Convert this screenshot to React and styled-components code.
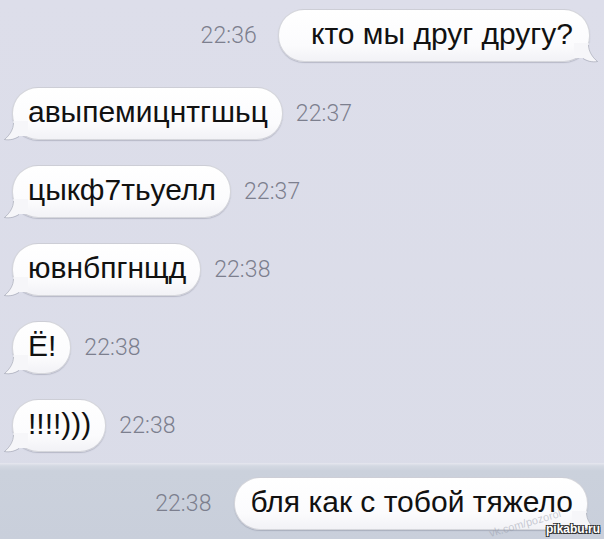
import React from "react";
import styled, { createGlobalStyle } from "styled-components";

const Global = createGlobalStyle`
  html, body { margin: 0; padding: 0; }
  body { background: #dcdde8; font-family: "Liberation Sans", Arial, sans-serif; }
`;

const Screen = styled.div`
  width: 604px;
  height: 539px;
  overflow: hidden;
  display: flex;
  flex-direction: column;
  background: linear-gradient(180deg, #dddeea 0%, #dadce8 100%);
  position: relative;
`;

const Thread = styled.div`
  height: 463px;
  box-sizing: border-box;
  padding: 9px 14px 0 12px;
  display: flex;
  flex-direction: column;
  gap: 25px;
`;

const Row = styled.div`
  display: flex;
  align-items: center;
  justify-content: ${(p) => (p.$out ? "flex-end" : "flex-start")};
  gap: ${(p) => (p.$out ? "21px" : "13px")};
`;

const Bubble = styled.div`
  position: relative;
  height: 53px;
  box-sizing: border-box;
  display: flex;
  align-items: center;
  padding: 0 ${(p) => p.$pr || 14}px 3px ${(p) => p.$pl || 15}px;
  border-radius: 26px;
  background: linear-gradient(180deg, #ffffff 0%, #fbfbfd 70%, #f2f2f6 100%);
  border: 1px solid rgba(120, 124, 140, 0.3);
  box-shadow: 0 1px 1px rgba(90, 95, 115, 0.28);
  font-size: 30px;
  color: #111;
  white-space: nowrap;
`;

const Time = styled.span`
  font-family: Roboto, "Liberation Sans", sans-serif;
  font-weight: 300;
  font-size: 23px;
  color: #7c7f8e;
  letter-spacing: 0.1px;
`;

const TailSvg = styled.svg`
  position: absolute;
  bottom: -2px;
  ${(p) => (p.$out ? "right: -9px; transform: scaleX(-1);" : "left: -9px;")}
  width: 24px;
  height: 20px;
  overflow: visible;
`;

const Tail = ({ out }) => (
  <TailSvg $out={out} viewBox="0 0 24 20">
    <path
      d="M9.5 0 C9.5 8, 6 14, 0.5 18.5 C6 19.5, 11 18, 15 15 L24 15 L24 0 Z"
      fill="#f6f6f9"
    />
    <path
      d="M9.5 2 C9.5 8, 6 14, 0.5 18.5 C6 19.5, 11 18, 15 15.5"
      fill="none"
      stroke="rgba(110,115,135,0.38)"
      strokeWidth="1"
    />
  </TailSvg>
);

const Footer = styled.div`
  flex: 1;
  background: linear-gradient(180deg, #e6e7ef 0px, #d3d8e2 3px, #cbd1dc 8px, #c9cfdb 100%);
  padding: 14px 16px 0 0;
  display: flex;
  align-items: flex-start;
  justify-content: flex-end;
`;

const FooterRow = styled.div`
  display: flex;
  align-items: center;
  gap: 22px;
  height: 53px;
`;

const Watermark = styled.div`
  position: absolute;
  right: 4px;
  bottom: 3px;
  font-family: "Liberation Sans", Arial, sans-serif;
  font-weight: bold;
  font-size: 12px;
  color: #fff;
  text-shadow: 1px 1px 0 #333, -1px -1px 0 #333, 1px -1px 0 #333, -1px 1px 0 #333;
`;

const VkMark = styled.div`
  position: absolute;
  right: 42px;
  bottom: 10px;
  transform: rotate(-16deg);
  font-size: 11px;
  line-height: 12px;
  color: rgba(150, 155, 170, 0.5);
  font-family: "Liberation Sans", Arial, sans-serif;
`;

const incoming = [
  { text: "авыпемицнтгшьц", time: "22:37" },
  { text: "цыкф7тьуелл", time: "22:37" },
  { text: "ювнбпгнщд", time: "22:38" },
  { text: "Ё!", time: "22:38" },
  { text: "!!!!)))", time: "22:38" },
];

export default function App() {
  return (
    <>
      <Global />
      <Screen>
        <Thread>
          <Row $out>
            <Time>22:36</Time>
            <Bubble $pl={32} $pr={16}>
              кто мы друг другу?
              <Tail out />
            </Bubble>
          </Row>
          {incoming.map((m, i) => (
            <Row key={i}>
              <Bubble>
                {m.text}
                <Tail />
              </Bubble>
              <Time>{m.time}</Time>
            </Row>
          ))}
        </Thread>
        <Footer>
          <FooterRow>
            <Time>22:38</Time>
            <Bubble $pl={16} $pr={14}>
              бля как с тобой тяжело
              <Tail out />
            </Bubble>
          </FooterRow>
        </Footer>
        <VkMark>vk.com/pozorol</VkMark>
        <Watermark>pikabu.ru</Watermark>
      </Screen>
    </>
  );
}
